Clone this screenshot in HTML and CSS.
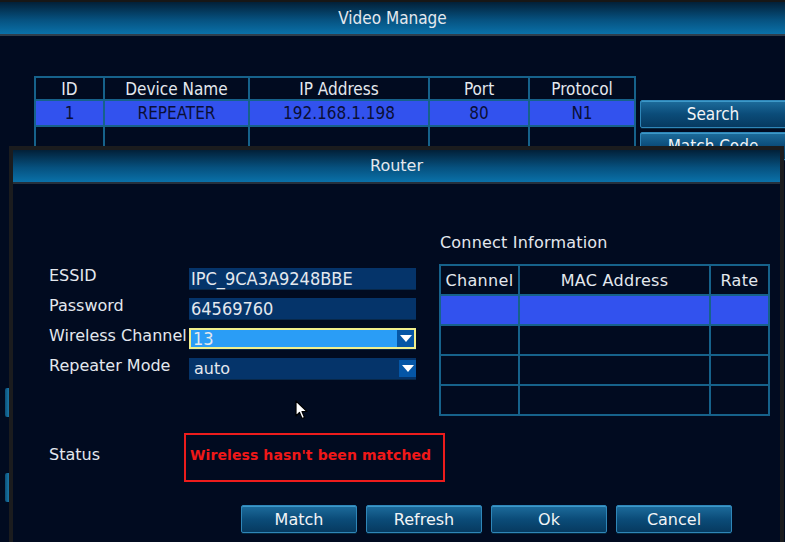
FILE: index.html
```html
<!DOCTYPE html>
<html lang="en">
  <head>
    <meta charset="UTF-8" />
    <title>Video Manage</title>
    <link rel="stylesheet" href="styles.css">
  </head>
  <body>
    <div class="screen">
      <div class="titlebar">Video Manage</div>
      <div class="main-body">
        <div class="left-rail">
          <span class="rail-btn"></span>
          <span class="rail-btn"></span>
        </div>
        <table class="device-table">
          <tr class="head">
            <th class="c-id">ID</th>
            <th class="c-name">Device Name</th>
            <th class="c-ip">IP Address</th>
            <th class="c-port">Port</th>
            <th class="c-proto">Protocol</th>
          </tr>
          <tr class="selected">
            <td>1</td>
            <td>REPEATER</td>
            <td>192.168.1.198</td>
            <td>80</td>
            <td>N1</td>
          </tr>
          <tr><td></td><td></td><td></td><td></td><td></td></tr>
          <tr><td></td><td></td><td></td><td></td><td></td></tr>
        </table>
        <div class="side-buttons">
          <button class="side-btn">Search</button>
          <button class="side-btn">Match Code</button>
        </div>
      </div>

      <div class="dialog">
        <div class="dialog-title">Router</div>
        <div class="dialog-body">
          <div class="top-part">
            <div class="form">
              <div class="row">
                <label>ESSID</label>
                <div class="field narrow-font">IPC_9CA3A9248BBE</div>
              </div>
              <div class="row">
                <label>Password</label>
                <div class="field narrow-font">64569760</div>
              </div>
              <div class="row">
                <label>Wireless Channel</label>
                <div class="field select focused narrow-font">
                  <span>13</span>
                  <span class="arrow"></span>
                </div>
              </div>
              <div class="row">
                <label>Repeater Mode</label>
                <div class="field select">
                  <span>auto</span>
                  <span class="arrow"></span>
                </div>
              </div>
            </div>
            <div class="connect">
              <div class="connect-title">Connect Information</div>
              <table class="connect-table">
                <tr class="head">
                  <th class="c-ch">Channel</th>
                  <th class="c-mac">MAC Address</th>
                  <th class="c-rate">Rate</th>
                </tr>
                <tr class="selected"><td></td><td></td><td></td></tr>
                <tr><td></td><td></td><td></td></tr>
                <tr><td></td><td></td><td></td></tr>
                <tr><td></td><td></td><td></td></tr>
              </table>
            </div>
          </div>
          <div class="status-row">
            <label>Status</label>
            <div class="status-box">Wireless hasn't been matched</div>
          </div>
          <div class="actions">
            <button class="btn">Match</button>
            <button class="btn">Refresh</button>
            <button class="btn">Ok</button>
            <button class="btn">Cancel</button>
          </div>
        </div>
        <svg class="cursor" width="13" height="20" viewBox="0 0 13 20">
          <path d="M1 1 L1 16 L4.5 12.5 L7 18.5 L9.5 17.5 L7 11.5 L12 11.5 Z" fill="#fff" stroke="#000" stroke-width="1.2" stroke-linejoin="round" />
        </svg>
      </div>
    </div>
  </body>
</html>
```

FILE: styles.css
```css
* {
  margin: 0;
  padding: 0;
  box-sizing: border-box;
}

body {
  background-color: #010b20;
  font-family: "DejaVu Sans", sans-serif;
  color: #e4e8ee;
}

.screen {
  position: relative;
  width: 785px;
  height: 542px;
  overflow: hidden;
  background-color: #010b20;
}

.narrow-font,
.titlebar,
.device-table,
.side-btn {
  font-family: "Liberation Sans Narrow", "DejaVu Sans Condensed", sans-serif;
}

.titlebar {
  height: 36px;
  border-top: 2px solid #171717;
  border-bottom: 2px solid #2f3e4c;
  background: linear-gradient(#022038, #06517f 55%, #0a71a9);
  text-align: center;
  line-height: 32px;
  font-size: 17px;
}

.main-body {
  display: flex;
  align-items: flex-start;
  padding: 40px 0 0 5px;
}

.left-rail {
  display: flex;
  flex: none;
  flex-direction: column;
  width: 4px;
  margin-top: 312px;
  gap: 56px;
}

.rail-btn {
  display: block;
  height: 29px;
  background: linear-gradient(90deg, #0a4f78, #1b78a8);
  border-radius: 2px 0 0 2px;
}

.device-table {
  flex: none;
  border-collapse: collapse;
  margin-left: 25px;
  font-size: 17px;
  text-align: center;
}

.device-table td,
.device-table th {
  border: 2px solid #16628b;
  font-weight: normal;
  padding: 0;
}

.device-table .head th {
  height: 23px;
  color: #e4e8ee;
}

.device-table td {
  height: 26px;
}

.device-table .selected td {
  background-color: #3252ee;
  color: #0a0f36;
}

.c-id { width: 69px; }
.c-name { width: 145px; }
.c-ip { width: 180px; }
.c-port { width: 100px; }
.c-proto { width: 106px; }

.side-buttons {
  display: flex;
  flex: none;
  flex-direction: column;
  gap: 4px;
  margin: 24px 0 0 4px;
}

.side-btn,
.btn {
  color: #f2f4f6;
  border: 1px solid #2f86b8;
  border-radius: 2px;
  background: linear-gradient(#1d6c9c, #0b4c79 50%, #063a60);
  box-shadow: inset 0 1px 0 #3c98c8, 0 1px 0 #05283f;
}

.side-btn {
  width: 150px;
  height: 28px;
  padding-right: 4px;
  font-size: 17px;
}

.dialog {
  position: absolute;
  left: 9px;
  top: 146px;
  width: 775px;
  height: 400px;
  border: 4px solid #1b1c1e;
  background-color: #010b20;
}

.dialog-title {
  height: 34px;
  border-bottom: 2px solid #25303c;
  background: linear-gradient(#022038, #06517f 55%, #0a71a9);
  text-align: center;
  line-height: 32px;
  font-size: 16px;
}

.dialog-body {
  padding: 0 0 0 36px;
  font-size: 16px;
}

.top-part {
  display: flex;
  align-items: flex-start;
}

.form {
  margin-top: 79px;
  width: 390px;
}

.row {
  display: flex;
  align-items: center;
  height: 30px;
}

.row label {
  width: 140px;
  flex: none;
  white-space: nowrap;
  padding-bottom: 5px;
}

.field {
  display: flex;
  align-items: center;
  justify-content: space-between;
  width: 227px;
  height: 21px;
  padding-left: 2px;
  background-color: #05346a;
  font-size: 18px;
  box-shadow: 0 1px 0 #08284a;
}

.field.select {
  padding-left: 5px;
  font-size: 16px;
}

.field.focused {
  background-color: #2a9df6;
  border: 2px solid #f1ef8c;
  padding-left: 2px;
  font-size: 18px;
}

.arrow {
  display: flex;
  align-items: center;
  justify-content: center;
  width: 17px;
  height: 17px;
  background-color: #0556a6;
}

.arrow::after {
  content: "";
  border-left: 6px solid transparent;
  border-right: 6px solid transparent;
  border-top: 7px solid #fff;
  margin-top: 1px;
}

.connect {
  margin-top: 49px;
}

.connect-title {
  height: 31px;
  padding-left: 1px;
  letter-spacing: 0.2px;
}

.connect-table {
  border-collapse: collapse;
  font-size: 16px;
  letter-spacing: 0.3px;
  text-align: center;
}

.connect-table td,
.connect-table th {
  border: 2px solid #16628b;
  font-weight: normal;
  padding: 0;
  height: 30px;
}

.connect-table .selected td {
  background-color: #3252ee;
}

.c-ch { width: 79px; }
.c-mac { width: 191px; }
.c-rate { width: 59px; }

.status-row {
  display: flex;
  align-items: flex-start;
  margin-top: 17px;
}

.status-row label {
  width: 135px;
  padding-top: 12px;
}

.status-box {
  width: 261px;
  height: 49px;
  border: 2px solid #ec1c1c;
  padding: 12px 0 0 4px;
  color: #f01818;
  font-weight: bold;
  font-size: 14px;
  letter-spacing: 0.1px;
}

.actions {
  display: flex;
  gap: 9px;
  margin: 23px 0 0 192px;
}

.btn {
  width: 116px;
  height: 28px;
  font-family: "DejaVu Sans", sans-serif;
  font-size: 16px;
}

.cursor {
  position: absolute;
  left: 282px;
  top: 250px;
}
```
